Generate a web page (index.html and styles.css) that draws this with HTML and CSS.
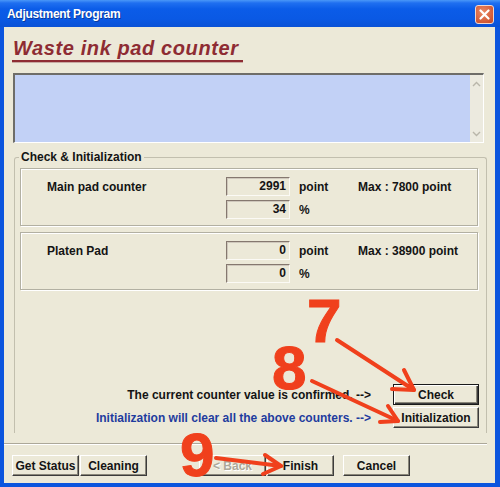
FILE: index.html
```html
<!DOCTYPE html>
<html>
<head>
<meta charset="utf-8">
<link rel="stylesheet" href="styles.css">
</head>
<body>
<div class="window">
  <div class="titlebar">
    <span class="title">Adjustment Program</span>
    <span class="close">
      <svg width="11" height="11" viewBox="0 0 11 11"><path d="M1.5 1.5 L9.5 9.5 M9.5 1.5 L1.5 9.5" stroke="#fff" stroke-width="2.2" stroke-linecap="round"/></svg>
    </span>
  </div>
  <div class="client">
    <div class="heading">Waste ink pad counter</div>
    <div class="textarea">
      <div class="ta-body"></div>
      <div class="scroll">
        <span class="sb-btn"><svg width="9" height="6" viewBox="0 0 9 6"><path d="M1 5 L4.5 1.5 L8 5" fill="none" stroke="#b9b6aa" stroke-width="1.4"/></svg></span>
        <span class="sb-btn"><svg width="9" height="6" viewBox="0 0 9 6"><path d="M1 1 L4.5 4.5 L8 1" fill="none" stroke="#b9b6aa" stroke-width="1.4"/></svg></span>
      </div>
    </div>
    <fieldset class="group">
      <legend>Check &amp; Initialization</legend>
      <div class="panel">
        <div class="row">
          <span class="lbl">Main pad counter</span>
          <span class="field">2991</span>
          <span class="unit">point</span>
          <span class="max">Max : 7800 point</span>
        </div>
        <div class="row">
          <span class="lbl"></span>
          <span class="field">34</span>
          <span class="unit">%</span>
        </div>
      </div>
      <div class="panel second">
        <div class="row">
          <span class="lbl">Platen Pad</span>
          <span class="field">0</span>
          <span class="unit">point</span>
          <span class="max">Max : 38900 point</span>
        </div>
        <div class="row">
          <span class="lbl"></span>
          <span class="field">0</span>
          <span class="unit">%</span>
        </div>
      </div>
      <div class="actions">
        <div class="act">
          <span class="msg">The current counter value is confirmed. --&gt;</span>
          <button class="btn wide default">Check</button>
        </div>
        <div class="act">
          <span class="msg blue">Initialization will clear all the above counters. --&gt;</span>
          <button class="btn wide">Initialization</button>
        </div>
      </div>
    </fieldset>
    <div class="separator"></div>
    <div class="footer">
      <button class="btn">Get Status</button>
      <button class="btn">Cleaning</button>
      <button class="btn disabled back">&lt; Back</button>
      <button class="btn">Finish</button>
      <button class="btn cancel">Cancel</button>
    </div>
  </div>

  <svg class="arrows" width="500" height="487" viewBox="0 0 500 487">
    <g fill="none" stroke="#f0401c" stroke-width="4" stroke-linecap="round" stroke-linejoin="round">
      <path d="M337 340 L414 390"/>
      <path d="M392 389 L414 390 L404 370"/>
      <path d="M312 381 L398 421"/>
      <path d="M380 422 L398 421 L388 406"/>
      <path d="M216 458 L281 466"/>
      <path d="M265 455 L281 466 L263 474"/>
    </g>
  </svg>
  <span class="num n7">7</span>
  <span class="num n8">8</span>
  <span class="num n9">9</span>
</div>
</body>
</html>
```

FILE: styles.css
```css
body {
  margin: 0;
}

.window {
  position: relative;
  width: 500px;
  height: 487px;
  box-sizing: border-box;
  display: flex;
  flex-direction: column;
  background: #0b55de;
  font: bold 12px "Liberation Sans", Arial, sans-serif;
  color: #141414;
  overflow: hidden;
}

.titlebar {
  height: 27px;
  flex: none;
  display: flex;
  align-items: center;
  justify-content: space-between;
  padding: 0 6px 0 7px;
  background: linear-gradient(#4a97f8 0, #1f6ff0 3px, #0b5ce8 9px, #0a59e4 70%, #0a52d6 100%);
}

.title {
  color: #fff;
  font-size: 12px;
  letter-spacing: -0.3px;
  text-shadow: 1px 1px 0 #0a3a9c;
  margin-top: 1px;
}

.close {
  width: 19px;
  height: 19px;
  box-sizing: border-box;
  border: 1px solid #f2d6cc;
  border-radius: 3px;
  background: radial-gradient(circle at 40% 35%, #ea8a66, #d35a36 70%, #c44a28);
  display: flex;
  align-items: center;
  justify-content: center;
  margin-top: 1px;
}

.client {
  flex: 1;
  margin: 0 5px 4px 4px;
  background: #ece9d8;
  display: flex;
  flex-direction: column;
}

.heading {
  align-self: flex-start;
  margin: 10px 0 0 8px;
  padding: 0 4px 1px 1px;
  font: italic bold 20px "Liberation Sans", Arial, sans-serif;
  letter-spacing: 0.6px;
  line-height: 22px;
  color: #8e2c33;
  border-bottom: 2px solid #8e2c33;
  box-shadow: 0 1px 0 #c8aaa2;
}

.textarea {
  margin: 11px 0 0 9px;
  width: 471px;
  height: 70px;
  box-sizing: border-box;
  display: flex;
  border-top: 2px solid #6e6d68;
  border-left: 2px solid #6e6d68;
  border-right: 1px solid #fff;
  border-bottom: 1px solid #fff;
}

.ta-body {
  flex: 1;
  background: #c2d1f6;
}

.scroll {
  width: 13px;
  background: #eceadf;
  display: flex;
  flex-direction: column;
  justify-content: space-between;
  padding: 2px 0;
}

.sb-btn {
  height: 13px;
  display: flex;
  align-items: center;
  justify-content: center;
}

.group {
  margin: 7px 0 0 10px;
  width: 473px;
  box-sizing: border-box;
  padding: 4px 8px 5px 5px;
  border: 1px solid #c2bfae;
  border-bottom: none;
  border-radius: 3px 3px 0 0;
  min-width: 0;
}

.group legend {
  padding: 0 2px;
  margin-left: -1px;
  line-height: 14px;
  color: #141414;
}

.panel {
  border: 1px solid #b2b0a2;
  box-shadow: 1px 1px 0 #fff, inset 1px 1px 0 #fff;
  padding: 8px 0 6px 26px;
  display: flex;
  flex-direction: column;
  gap: 4px;
}

.panel.second {
  margin-top: 6px;
}

.row {
  display: flex;
  align-items: center;
  height: 19px;
}

.lbl {
  width: 179px;
}

.field {
  width: 64px;
  height: 19px;
  box-sizing: border-box;
  margin-right: 9px;
  border-top: 1px solid #85786f;
  border-left: 1px solid #85786f;
  border-right: 1px solid #fbfaf5;
  border-bottom: 1px solid #fbfaf5;
  box-shadow: inset 1px 1px 0 #cfc8bc;
  text-align: right;
  padding-right: 3px;
  line-height: 17px;
}

.unit {
  width: 59px;
}

.actions {
  margin-top: 94px;
  margin-right: -1px;
  display: flex;
  flex-direction: column;
  gap: 2px;
}

.act {
  display: flex;
  align-items: center;
  justify-content: flex-end;
  gap: 22px;
}

.msg.blue {
  color: #1f3c9e;
}

.btn {
  box-sizing: border-box;
  width: 67px;
  height: 21px;
  padding: 0;
  margin: 0;
  background: #ece9d8;
  border: 1px solid;
  border-color: #fff #3c3c3c #3c3c3c #fff;
  box-shadow: inset -1px -1px 0 #8a877a;
  font: bold 12px "Liberation Sans", Arial, sans-serif;
  color: #141414;
  display: flex;
  align-items: center;
  justify-content: center;
}

.btn.wide {
  width: 86px;
}

.btn.default {
  border-color: #1a1a1a;
  box-shadow: inset 1px 1px 0 #fff, inset -1px -1px 0 #3c3c3c, inset -2px -2px 0 #8a877a;
}

.btn.disabled {
  color: #aca899;
  text-shadow: 1px 1px 0 #fff;
}

.separator {
  margin: 10px 8px 0 0;
  border-top: 1px solid #aca899;
  border-bottom: 1px solid #fff;
}

.footer {
  margin: 10px 0 0 8px;
  display: flex;
  gap: 1px;
}

.btn.back {
  margin-left: 51px;
}

.btn.cancel {
  margin-left: 8px;
}

.arrows {
  position: absolute;
  left: 0;
  top: 0;
  pointer-events: none;
}

.num {
  position: absolute;
  font: bold 62px/62px "Liberation Sans", Arial, sans-serif;
  color: #f0401c;
  -webkit-text-stroke: 1px #f0401c;
}

.n7 {
  left: 307px;
  top: 290px;
}

.n8 {
  left: 272px;
  top: 337px;
}

.n9 {
  left: 180px;
  top: 424px;
}
```
